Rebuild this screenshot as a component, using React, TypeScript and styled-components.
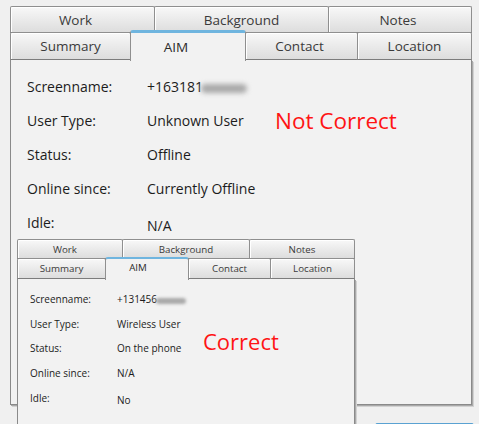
import React from "react";
import styled, { createGlobalStyle, css } from "styled-components";

type Size = "large" | "small";

const dims = {
  large: {
    font: 14,
    tabFont: 13.5,
    topRow: 27,
    bottomRow: 28,
    labelW: 120,
    pitch: 33.8,
    padTop: 10,
    padLeft: 16,
    lift: 3,
    accent: 3,
    activePad: 5,
    bodyH: 345,
  },
  small: {
    font: 10,
    tabFont: 9.75,
    topRow: 20,
    bottomRow: 21,
    labelW: 87,
    pitch: 24.6,
    padTop: 8,
    padLeft: 12,
    lift: 2,
    accent: 2,
    activePad: 2,
    bodyH: 160,
  },
};

const GlobalStyle = createGlobalStyle`
  html, body {
    margin: 0;
    padding: 0;
    overflow: hidden;
    background: #f0f0f0;
    font-family: "Open Sans", "Noto Sans", sans-serif;
  }
`;

const Stage = styled.div`
  position: relative;
  width: 479px;
  height: 424px;
  overflow: hidden;
  padding: 6px 0 0 10px;
  box-sizing: border-box;
`;

const Pane = styled.div<{ $w: number }>`
  width: ${(p) => p.$w}px;
  display: flex;
  flex-direction: column;
`;

// the second card sits over the first one
const Overlay = styled.div`
  position: absolute;
  left: 17px;
  top: 239px;
`;

const TabRow = styled.div<{ $sz: Size; $second?: boolean }>`
  display: flex;
  align-items: flex-end;
  height: ${(p) => (p.$second ? dims[p.$sz].bottomRow : dims[p.$sz].topRow)}px;
  ${(p) =>
    p.$second &&
    css`
      margin-top: -1px;
    `}
`;

const Tab = styled.div<{ $sz: Size; $w: number; $active?: boolean; $nudge?: number }>`
  box-sizing: border-box;
  flex: none;
  width: ${(p) => p.$w}px;
  height: 100%;
  display: flex;
  align-items: center;
  justify-content: center;
  padding-right: ${(p) => (p.$nudge ?? 0) * 2}px;
  border: 1px solid #8f8f8f;
  border-bottom-color: #7c7c7c;
  border-radius: 2px 2px 0 0;
  background: linear-gradient(#f8f8f8, #e9e9e9 55%, #dddddd);
  box-shadow: inset 1px 1px 0 #ffffff;
  color: #3a3a3a;
  font-size: ${(p) => dims[p.$sz].tabFont}px;
  white-space: nowrap;

  & + & {
    margin-left: -1px;
  }

  ${(p) =>
    p.$active &&
    css`
      position: relative;
      z-index: 1;
      height: calc(100% + ${dims[p.$sz].lift}px);
      margin-bottom: -1px;
      border-top: ${dims[p.$sz].accent}px solid #6fb5df;
      border-bottom: none;
      border-radius: 3px 3px 0 0;
      background: #f2f2f2;
      box-shadow: none;
      color: #2a2a2a;
      align-items: flex-start;
      padding-top: ${dims[p.$sz].activePad}px;
    `}
`;

const Body = styled.div<{ $sz: Size }>`
  position: relative;
  box-sizing: border-box;
  height: ${(p) => dims[p.$sz].bodyH}px;
  padding: ${(p) => dims[p.$sz].padTop}px 0 0 ${(p) => dims[p.$sz].padLeft}px;
  border: 1px solid #8a8a8a;
  border-top: none;
  background: #f2f2f2;
  box-shadow: 1px 1px 0 #a9a9a9, 2px 2px 0 #d2d2d2;
`;

const Fields = styled.div<{ $sz: Size }>`
  display: grid;
  grid-template-columns: ${(p) => dims[p.$sz].labelW}px auto;
  grid-auto-rows: ${(p) => dims[p.$sz].pitch}px;
  align-items: center;
  font-size: ${(p) => dims[p.$sz].font}px;
  color: #1c1c1c;
`;

const Label = styled.span``;

const Value = styled.span<{ $drop?: number }>`
  ${(p) =>
    p.$drop &&
    css`
      margin-top: ${p.$drop * 2}px;
    `}
`;

// smudged-out tail of the screen name
const Blur = styled.span<{ $sz: Size }>`
  display: inline-block;
  vertical-align: middle;
  width: ${(p) => (p.$sz === "large" ? 46 : 30)}px;
  height: ${(p) => (p.$sz === "large" ? 9 : 6)}px;
  margin-left: ${(p) => (p.$sz === "large" ? -2 : -1)}px;
  border-radius: 5px;
  background: #a9a9a9;
  filter: blur(${(p) => (p.$sz === "large" ? 2.5 : 1.5)}px);
`;

const Note = styled.div<{ $x: number; $y: number; $size: number }>`
  position: absolute;
  left: ${(p) => p.$x}px;
  top: ${(p) => p.$y}px;
  color: #ff1414;
  font-size: ${(p) => p.$size}px;
  line-height: 1.2;
  white-space: nowrap;
`;

const Footer = styled.div`
  display: flex;
  justify-content: flex-end;
  width: 464px;
  margin-top: 18px;
`;

const Button = styled.div`
  width: 97px;
  height: 24px;
  border: 1px solid #5aa2d2;
  border-radius: 2px;
  background: linear-gradient(#eaf6fd, #c6e4f6);
`;

interface Field {
  label: string;
  value: string;
  blurred?: boolean;
  drop?: number;
}

interface CardProps {
  sz: Size;
  width: number;
  top: [string, number, number?][];
  bottom: [string, number, number?][];
  active: string;
  fields: Field[];
  note: { text: string; x: number; y: number; size: number };
}

const ContactCard = ({ sz, width, top, bottom, active, fields, note }: CardProps) => (
  <Pane $w={width}>
    <TabRow $sz={sz}>
      {top.map(([name, w, nudge]) => (
        <Tab key={name} $sz={sz} $w={w} $nudge={nudge}>
          {name}
        </Tab>
      ))}
    </TabRow>
    <TabRow $sz={sz} $second>
      {bottom.map(([name, w, nudge]) => (
        <Tab key={name} $sz={sz} $w={w} $nudge={nudge} $active={name === active}>
          {name}
        </Tab>
      ))}
    </TabRow>
    <Body $sz={sz}>
      <Fields $sz={sz}>
        {fields.map((f) => (
          <React.Fragment key={f.label}>
            <Label>{f.label}</Label>
            <Value $drop={f.drop}>
              {f.value}
              {f.blurred && <Blur $sz={sz} />}
            </Value>
          </React.Fragment>
        ))}
      </Fields>
      <Note $x={note.x} $y={note.y} $size={note.size}>
        {note.text}
      </Note>
    </Body>
  </Pane>
);

export default function App() {
  return (
    <>
      <GlobalStyle />
      <Stage>
        <ContactCard
          sz="large"
          width={462}
          top={[
            ["Work", 145, 7],
            ["Background", 175],
            ["Notes", 144, 2],
          ]}
          bottom={[
            ["Summary", 121],
            ["AIM", 116, 12],
            ["Contact", 113, 2],
            ["Location", 115],
          ]}
          active="AIM"
          fields={[
            { label: "Screenname:", value: "+163181", blurred: true },
            { label: "User Type:", value: "Unknown User" },
            { label: "Status:", value: "Offline" },
            { label: "Online since:", value: "Currently Offline" },
            { label: "Idle:", value: "N/A", drop: 3 },
          ]}
          note={{ text: "Not Correct", x: 264, y: 47, size: 22.5 }}
        />
        <Footer>
          <Button />
        </Footer>
        <Overlay>
          <ContactCard
            sz="small"
            width={338}
            top={[
              ["Work", 106, 5],
              ["Background", 128],
              ["Notes", 106],
            ]}
            bottom={[
              ["Summary", 89],
              ["AIM", 84, 9],
              ["Contact", 83],
              ["Location", 85],
            ]}
            active="AIM"
            fields={[
              { label: "Screenname:", value: "+131456", blurred: true },
              { label: "User Type:", value: "Wireless User" },
              { label: "Status:", value: "On the phone" },
              { label: "Online since:", value: "N/A" },
              { label: "Idle:", value: "No", drop: 2 },
            ]}
            note={{ text: "Correct", x: 185, y: 49, size: 22 }}
          />
        </Overlay>
      </Stage>
    </>
  );
}
